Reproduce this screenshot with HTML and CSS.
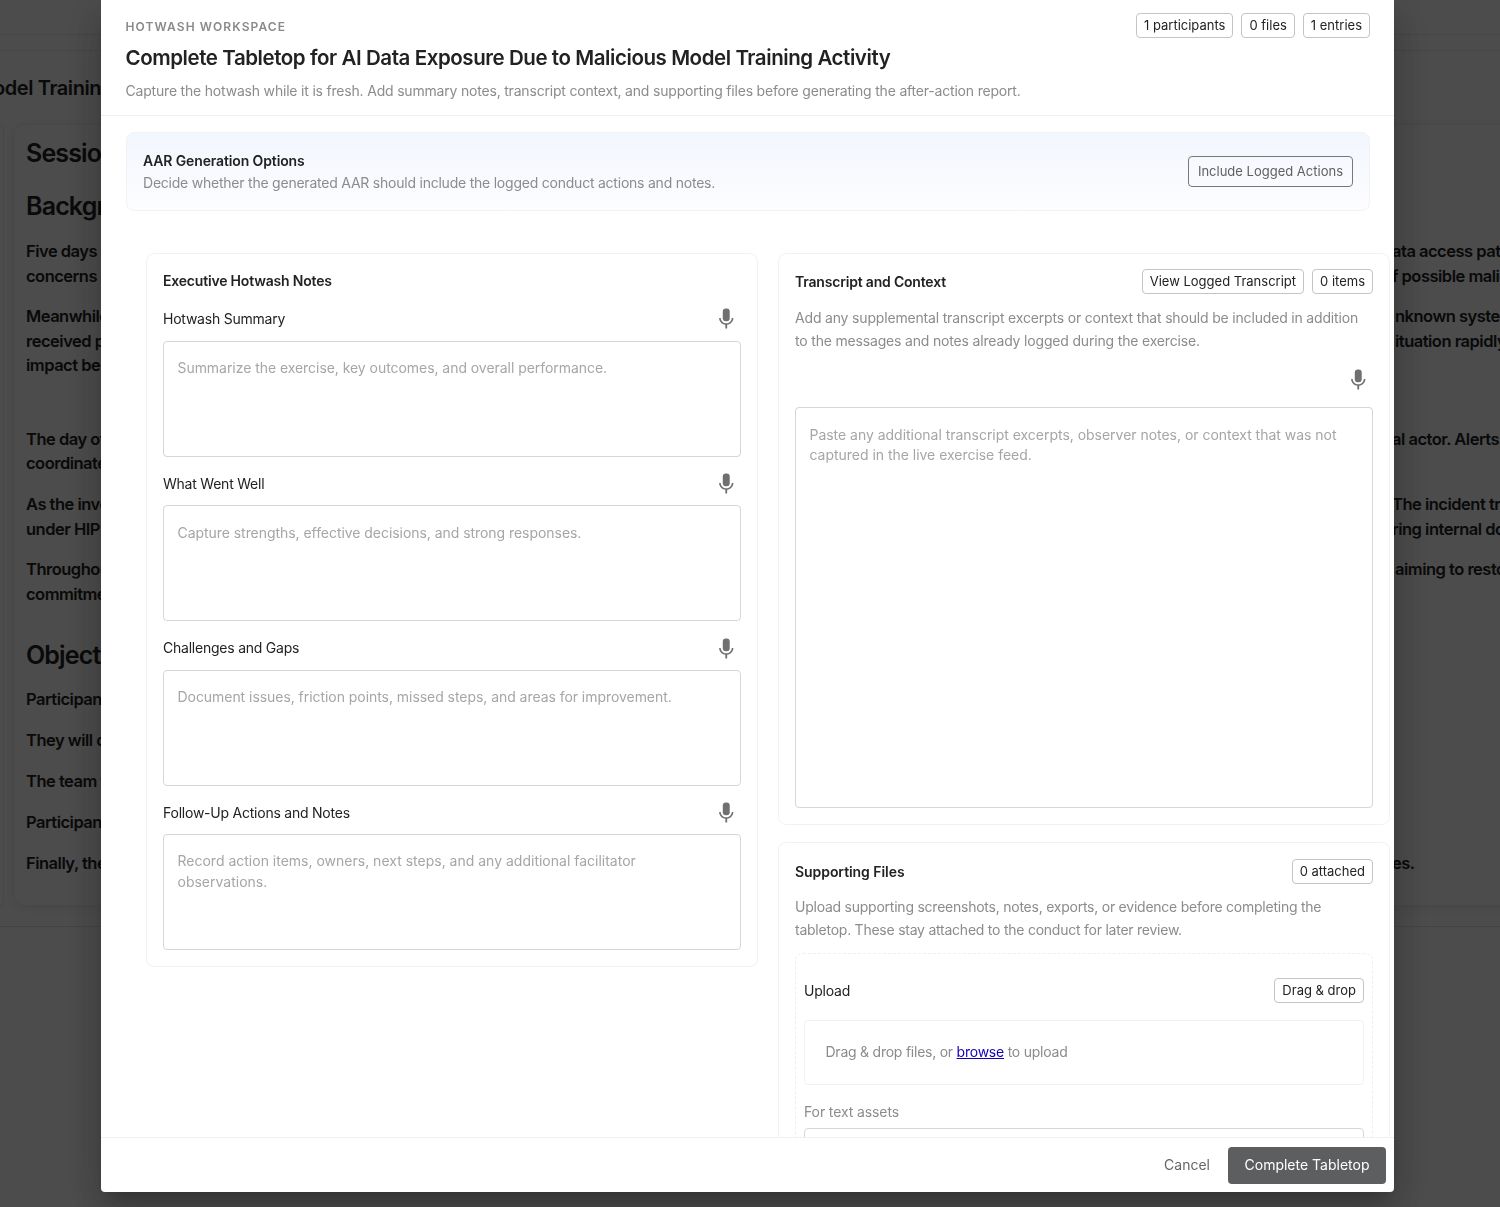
FILE: index.html
```html
<!DOCTYPE html>
<html lang="en">
<head>
  <meta charset="UTF-8" />
  <meta name="viewport" content="width=device-width, initial-scale=1.0" />
  <title>Hotwash Workspace</title>
  <link rel="stylesheet" href="styles.css">
</head>
<body>

  <svg class="sprite" width="0" height="0">
    <symbol id="mic" viewBox="0 0 24 24">
      <rect x="8.6" y="2.4" width="6.8" height="12.6" rx="3" />
      <path d="M5 11.7c0 3.42 2.72 6.23 6.1 6.72V22h1.8v-3.58c3.38-.48 6.1-3.3 6.1-6.72h-1.6c0 3-2.6 5.2-5.4 5.2s-5.4-2.2-5.4-5.2H5z" />
    </symbol>
  </svg>

  <!-- page behind the dialog -->
  <div class="page">
    <div class="topbar"></div>
    <div class="conduct">
      <div class="conduct-title">odel Training</div>
      <div class="conduct-body">
        <div class="side-card"></div>
        <div class="session">
          <h2>Session</h2>
          <h2>Backgr</h2>
          <div class="para"><p>Five days b<br>concerns a</p><p class="rest">ata access patterns<br>f possible malicious</p></div>
          <div class="para"><p>Meanwhile<br>received p<br>impact be</p><p class="rest shift">nknown systems<br>ituation rapidly</p></div>
          <div class="para after-gap"><p>The day of<br>coordinate</p><p class="rest">al actor. Alerts</p></div>
          <div class="para"><p>As the inve<br>under HIP</p><p class="rest">The incident tr<br>ring internal do</p></div>
          <div class="para"><p>Throughou<br>commitme</p><p class="rest shift">aiming to restore</p></div>
          <h2 class="objectives">Object</h2>
          <div class="para"><p>Participan</p></div>
          <div class="para"><p>They will c</p></div>
          <div class="para"><p>The team t</p></div>
          <div class="para"><p>Participan</p></div>
          <div class="para"><p>Finally, the</p><p class="rest">es.</p></div>
        </div>
      </div>
    </div>
  </div>

  <div class="backdrop">
    <div class="dialog">

      <header class="dialog-header">
        <div>
          <div class="eyebrow">HOTWASH WORKSPACE</div>
          <h1>Complete Tabletop for AI Data Exposure Due to Malicious Model Training Activity</h1>
          <p class="subtitle">Capture the hotwash while it is fresh. Add summary notes, transcript context, and supporting files before generating the after-action report.</p>
        </div>
        <div class="chips">
          <span class="chip">1 participants</span>
          <span class="chip">0 files</span>
          <span class="chip">1 entries</span>
        </div>
      </header>

      <main class="dialog-body">
        <section class="options">
          <div>
            <h3>AAR Generation Options</h3>
            <p>Decide whether the generated AAR should include the logged conduct actions and notes.</p>
          </div>
          <button class="outlined">Include Logged Actions</button>
        </section>

        <div class="columns">
          <section class="panel">
            <h3>Executive Hotwash Notes</h3>

            <div class="field">
              <div class="field-head"><label for="summary">Hotwash Summary</label><svg class="mic"><use href="#mic" /></svg></div>
              <textarea id="summary" placeholder="Summarize the exercise, key outcomes, and overall performance."></textarea>
            </div>
            <div class="field">
              <div class="field-head"><label for="well">What Went Well</label><svg class="mic"><use href="#mic" /></svg></div>
              <textarea id="well" placeholder="Capture strengths, effective decisions, and strong responses."></textarea>
            </div>
            <div class="field">
              <div class="field-head"><label for="gaps">Challenges and Gaps</label><svg class="mic"><use href="#mic" /></svg></div>
              <textarea id="gaps" placeholder="Document issues, friction points, missed steps, and areas for improvement."></textarea>
            </div>
            <div class="field">
              <div class="field-head"><label for="follow">Follow-Up Actions and Notes</label><svg class="mic"><use href="#mic" /></svg></div>
              <textarea id="follow" class="follow" placeholder="Record action items, owners, next steps, and any additional facilitator observations."></textarea>
            </div>
          </section>

          <div class="stack">
            <section class="panel">
              <div class="panel-head">
                <h3>Transcript and Context</h3>
                <div class="chips">
                  <span class="chip">View Logged Transcript</span>
                  <span class="chip">0 items</span>
                </div>
              </div>
              <p class="hint">Add any supplemental transcript excerpts or context that should be included in addition to the messages and notes already logged during the exercise.</p>
              <div class="field-head mic-only"><svg class="mic"><use href="#mic" /></svg></div>
              <textarea class="transcript" placeholder="Paste any additional transcript excerpts, observer notes, or context that was not captured in the live exercise feed."></textarea>
            </section>

            <section class="panel files">
              <div class="panel-head">
                <h3 class="wide">Supporting Files</h3>
                <span class="chip">0 attached</span>
              </div>
              <p class="hint files-hint">Upload supporting screenshots, notes, exports, or evidence before completing the tabletop. These stay attached to the conduct for later review.</p>
              <div class="upload">
                <div class="panel-head">
                  <span class="upload-title">Upload</span>
                  <span class="chip">Drag &amp; drop</span>
                </div>
                <div class="dropzone">Drag &amp; drop files, or <a href="#">browse</a> to upload</div>
                <label class="text-label" for="asset">For text assets</label>
                <input id="asset" class="text-input" type="text">
              </div>
            </section>
          </div>
        </div>
      </main>

      <footer class="dialog-footer">
        <button class="cancel">Cancel</button>
        <button class="complete">Complete Tabletop</button>
      </footer>
    </div>
  </div>

</body>
</html>
```
FILE: styles.css
```css
* { margin: 0; padding: 0; box-sizing: border-box; }

html, body {
  width: 100%;
  height: 100%;
  overflow: hidden;
  background: #fff;
}

body, button, input, textarea {
  font-family: Inter, "Liberation Sans", sans-serif;
  font-size: 14px;
  color: #222;
}

.sprite { display: none; }

/* page behind the dialog */
.page {
  height: 100%;
  overflow: hidden;
}

.topbar {
  height: 35px;
  border-bottom: 1px solid #eaeaea;
  margin-bottom: 15px;
}

.conduct {
  height: 877px;
  border-top: 1px solid #eaeaea;
  border-bottom: 1px solid #e4e4e4;
}

.conduct-title {
  height: 73px;
  margin-left: -7px;
  padding-top: 24px;
  font-size: 20px;
  line-height: 26px;
  font-weight: 600;
  letter-spacing: -0.4px;
}

.conduct-body {
  display: flex;
  gap: 9px;
  height: 782px;
}

.side-card {
  width: 4px;
  border: 1px solid #eee;
  border-left: 0;
  border-radius: 0 10px 10px 0;
}

.session {
  flex: none;
  width: 1600px;
  padding: 11px 12px;
  border: 1px solid #eee;
  border-radius: 12px;
  box-shadow: 0 2px 12px rgba(0, 0, 0, 0.08);
}

/* the side card is only partly in view and must keep its width */
.side-card { flex: none; }

.session h2 {
  height: 53px;
  font-size: 25px;
  line-height: 34px;
  font-weight: 600;
  letter-spacing: -0.85px;
}

.session .objectives {
  height: 49px;
  margin-top: 32px;
}

.session h2 + .para { margin-top: -3px; }

.session .objectives + .para { margin-top: 0; }

.para {
  display: flex;
  margin-bottom: 16.3px;
  font-size: 16.5px;
  line-height: 24.5px;
  font-weight: 600;
  letter-spacing: -0.5px;
  white-space: nowrap;
}

.para > p:first-child { width: 1366px; flex: none; }
.para.after-gap { margin-top: 49px; }
.shift { padding-left: 3px; }

/* dialog */
.backdrop {
  position: fixed;
  inset: 0;
  background: rgba(0, 0, 0, 0.7);
}

.dialog {
  display: flex;
  flex-direction: column;
  width: 1293px;
  height: 1191.5px;
  margin-left: 101px;
  background: #fff;
  border-radius: 0 0 4px 4px;
  overflow: hidden;
  box-shadow: 0 11px 15px -7px rgba(0, 0, 0, 0.2), 0 24px 38px 3px rgba(0, 0, 0, 0.14), 0 9px 46px 8px rgba(0, 0, 0, 0.12);
}

.dialog-header {
  flex: none;
  display: flex;
  justify-content: space-between;
  align-items: flex-start;
  height: 116px;
  padding: 12px 24px 0 24.5px;
  border-bottom: 1px solid #f0f0f0;
}

.dialog-header .chips { padding-top: 0.5px; }

.eyebrow {
  margin-top: 5px;
  font-size: 12px;
  line-height: 20px;
  font-weight: 600;
  letter-spacing: 1.1px;
  color: #8a8a8a;
}

h1 {
  margin-top: 6.5px;
  font-size: 20.5px;
  line-height: 28px;
  font-weight: 600;
  letter-spacing: -0.43px;
}

.subtitle {
  margin-top: 7.5px;
  line-height: 23px;
  letter-spacing: -0.194px;
  color: #8c8c8c;
}

.chips { display: flex; gap: 8px; }

.chip {
  height: 25px;
  padding: 0 7px;
  border: 1px solid #c4c4c4;
  border-radius: 4px;
  font-size: 13px;
  line-height: 23px;
  white-space: nowrap;
}

.dialog-body {
  flex: 1;
  min-height: 0;
  overflow: hidden;
  padding: 16px 24px 0 25px;
}

.options {
  display: flex;
  justify-content: space-between;
  align-items: center;
  height: 79px;
  padding: 0 16px;
  border: 1px solid #f0f2f5;
  border-radius: 8px;
  background: linear-gradient(#f2f6fd, #fdfdff);
}

.options p {
  line-height: 22px;
  letter-spacing: -0.227px;
  color: #8c8c8c;
}

h3 {
  font-size: 14px;
  line-height: 22px;
  font-weight: 600;
  letter-spacing: -0.19px;
}

.options h3 { letter-spacing: -0.13px; }

h3.wide { letter-spacing: -0.06px; }

.outlined {
  height: 31px;
  padding: 0 9px 1px;
  border: 1px solid #77787b;
  border-radius: 4px;
  background: transparent;
  font-size: 13px;
  color: #5f6062;
}

.columns {
  display: grid;
  grid-template-columns: 612px 612px;
  gap: 20px;
  align-items: start;
  margin: 42px 0 0 20px;
}

.stack {
  display: flex;
  flex-direction: column;
  gap: 17px;
}

.panel {
  padding: 16px;
  border: 1px solid #f2f2f2;
  border-radius: 8px;
}

.stack .panel { padding-top: 15px; }

.stack .files { padding-top: 16px; }

.panel-head {
  display: flex;
  justify-content: space-between;
  align-items: center;
}

.field { margin-top: 10.6px; }

.field-head {
  display: flex;
  justify-content: space-between;
  align-items: center;
  height: 32px;
  margin-bottom: 6px;
  padding-right: 3px;
}

.field-head label { letter-spacing: -0.23px; }

.mic {
  width: 24.5px;
  height: 24.5px;
  fill: #707070;
}

.mic-only {
  justify-content: flex-end;
  margin: 11px 0 12px;
}

textarea {
  display: block;
  width: 100%;
  height: 116px;
  padding: 16.5px 18px 0 13.5px;
  border: 1px solid #d6d6d6;
  border-radius: 4px;
  background: #fff;
  line-height: 20.5px;
  letter-spacing: -0.05px;
  resize: none;
  outline: none;
}

textarea::placeholder { color: #a6a6a6; }

.follow {
  padding-top: 16px;
  letter-spacing: 0;
}

.transcript { height: 401px; letter-spacing: -0.025px; }

.hint {
  margin-top: 12px;
  line-height: 23px;
  letter-spacing: -0.175px;
  color: #8c8c8c;
}

.files-hint {
  margin-top: 11px;
  letter-spacing: -0.24px;
}

.upload {
  margin-top: 12px;
  padding: 24px 8px;
  border: 1px dashed #efefef;
  border-radius: 8px;
}

.upload-title { letter-spacing: -0.2px; }

.dropzone {
  height: 65px;
  margin-top: 17px;
  padding-left: 20.5px;
  border: 1px solid #f2f2f2;
  border-radius: 4px;
  line-height: 62px;
  letter-spacing: -0.237px;
  color: #8c8c8c;
}

.dropzone a { color: #1400b8; }

.text-label {
  display: block;
  margin-top: 16px;
  line-height: 22px;
  letter-spacing: -0.11px;
  color: #8c8c8c;
}

.text-input {
  width: 100%;
  height: 36px;
  margin-top: 5px;
  border: 1px solid #d6d6d6;
  border-radius: 4px;
}

.dialog-footer {
  flex: none;
  display: flex;
  justify-content: flex-end;
  align-items: center;
  height: 54.5px;
  padding: 1px 8px 0;
  border-top: 1px solid #f0f0f0;
}

.dialog-footer button {
  height: 37.5px;
  padding-bottom: 1px;
  border: 0;
  border-radius: 4px;
}

.cancel {
  padding: 0 18px;
  background: none;
  color: #666;
}

.complete {
  width: 158px;
  background: #5d5e60;
  color: #fff;
}
```
